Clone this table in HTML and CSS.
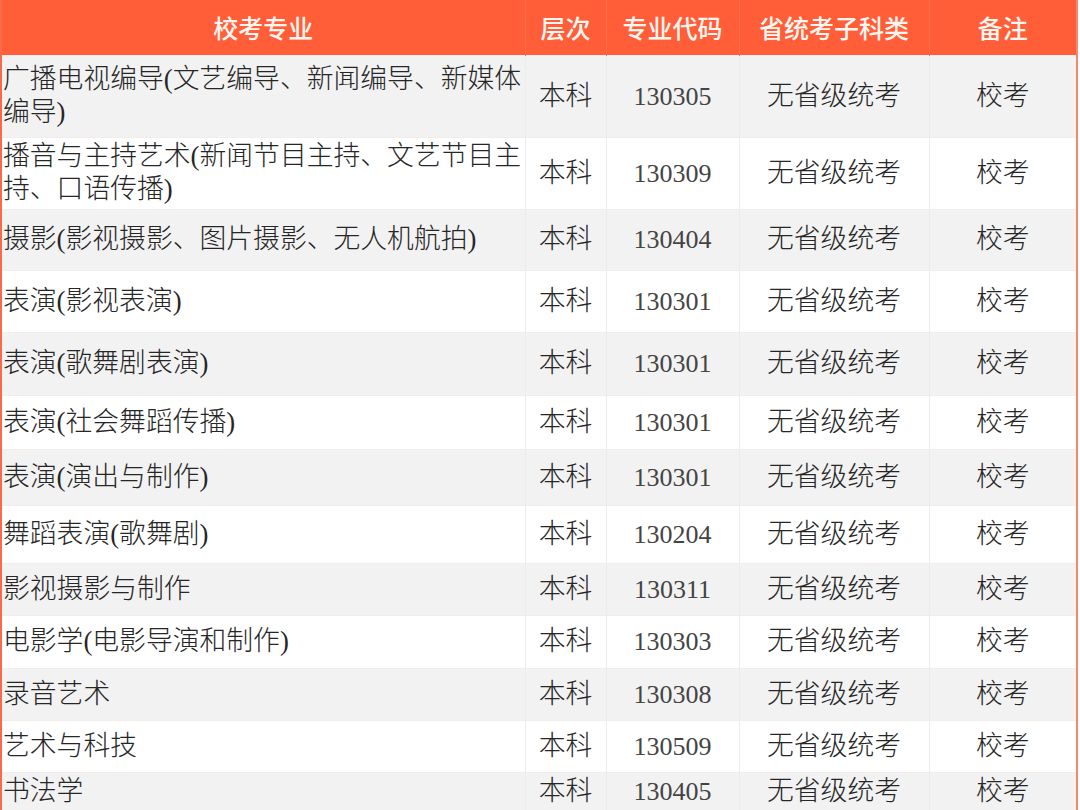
FILE: index.html
```html
<!DOCTYPE html>
<html lang="zh-CN">
<head>
<meta charset="utf-8">
<title>校考专业</title>
<link rel="stylesheet" href="styles.css">
</head>
<body>
<table class="tbl">
  <colgroup>
    <col class="c-major">
    <col class="c-level">
    <col class="c-code">
    <col class="c-cat">
    <col class="c-note">
  </colgroup>
  <thead>
    <tr class="head">
      <th>校考专业</th><th>层次</th><th>专业代码</th><th>省统考子科类</th><th>备注</th>
    </tr>
  </thead>
  <tbody>
    <tr class="r h82"><td class="major">广播电视编导(文艺编导、新闻编导、新媒体编导)</td><td>本科</td><td class="num">130305</td><td>无省级统考</td><td>校考</td></tr>
    <tr class="r h72"><td class="major">播音与主持艺术(新闻节目主持、文艺节目主持、口语传播)</td><td>本科</td><td class="num">130309</td><td>无省级统考</td><td>校考</td></tr>
    <tr class="r h61"><td class="major">摄影(影视摄影、图片摄影、无人机航拍)</td><td>本科</td><td class="num">130404</td><td>无省级统考</td><td>校考</td></tr>
    <tr class="r h62"><td class="major">表演(影视表演)</td><td>本科</td><td class="num">130301</td><td>无省级统考</td><td>校考</td></tr>
    <tr class="r h63"><td class="major">表演(歌舞剧表演)</td><td>本科</td><td class="num">130301</td><td>无省级统考</td><td>校考</td></tr>
    <tr class="r h54"><td class="major">表演(社会舞蹈传播)</td><td>本科</td><td class="num">130301</td><td>无省级统考</td><td>校考</td></tr>
    <tr class="r h56"><td class="major">表演(演出与制作)</td><td>本科</td><td class="num">130301</td><td>无省级统考</td><td>校考</td></tr>
    <tr class="r h58"><td class="major">舞蹈表演(歌舞剧)</td><td>本科</td><td class="num">130204</td><td>无省级统考</td><td>校考</td></tr>
    <tr class="r h52"><td class="major">影视摄影与制作</td><td>本科</td><td class="num">130311</td><td>无省级统考</td><td>校考</td></tr>
    <tr class="r h53"><td class="major">电影学(电影导演和制作)</td><td>本科</td><td class="num">130303</td><td>无省级统考</td><td>校考</td></tr>
    <tr class="r h52"><td class="major">录音艺术</td><td>本科</td><td class="num">130308</td><td>无省级统考</td><td>校考</td></tr>
    <tr class="r h52"><td class="major">艺术与科技</td><td>本科</td><td class="num">130509</td><td>无省级统考</td><td>校考</td></tr>
    <tr class="r h38"><td class="major">书法学</td><td>本科</td><td class="num">130405</td><td>无省级统考</td><td>校考</td></tr>
  </tbody>
</table>
</body>
</html>
```

FILE: styles.css
```css
html, body {
  margin: 0;
  padding: 0;
  background: #ffffff;
  overflow: hidden;
}

.tbl {
  width: 1078px;
  table-layout: fixed;
  border-collapse: collapse;
  font-family: "Liberation Serif", "Noto Sans CJK SC", serif;
  font-size: 26.8px;
  font-weight: 300;
  color: #262626;
  border-left: 2px solid #f86a4c;
  border-right: 2px solid #f8856c;
}

.c-major { width: 524px; }
.c-level { width: 81px; }
.c-code { width: 133px; }
.c-cat { width: 190px; }
.c-note { width: 148px; }

.head {
  background: #ff5e38;
  height: 55px;
}

.head th {
  font-family: "Noto Sans CJK SC", sans-serif;
  font-weight: 500;
  font-size: 25px;
  color: #fff6f2;
  text-align: center;
  padding: 0;
  line-height: 30px;
  border-right: 1px solid #ff6a47;
}

.r td {
  padding: 0;
  text-align: center;
  vertical-align: middle;
  line-height: 33px;
  border-right: 1px solid #ececec;
  border-top: 1px solid #f3ecea;
}

.r td.num {
  font-size: 26px;
  color: #444444;
}

.r td.major {
  text-align: left;
  padding-left: 1px;
  padding-right: 0;
}

.r td:last-child {
  border-right: none;
}

.r:nth-child(odd) { background: #f2f2f2; }
.r:nth-child(even) { background: #ffffff; }

.h82 { height: 82px; }
.h72 { height: 72px; }
.h63 { height: 63px; }
.h62 { height: 62px; }
.h61 { height: 61px; }
.h58 { height: 58px; }
.h56 { height: 56px; }
.h54 { height: 54px; }
.h53 { height: 53px; }
.h52 { height: 52px; }
.h38 { height: 38px; }
```
